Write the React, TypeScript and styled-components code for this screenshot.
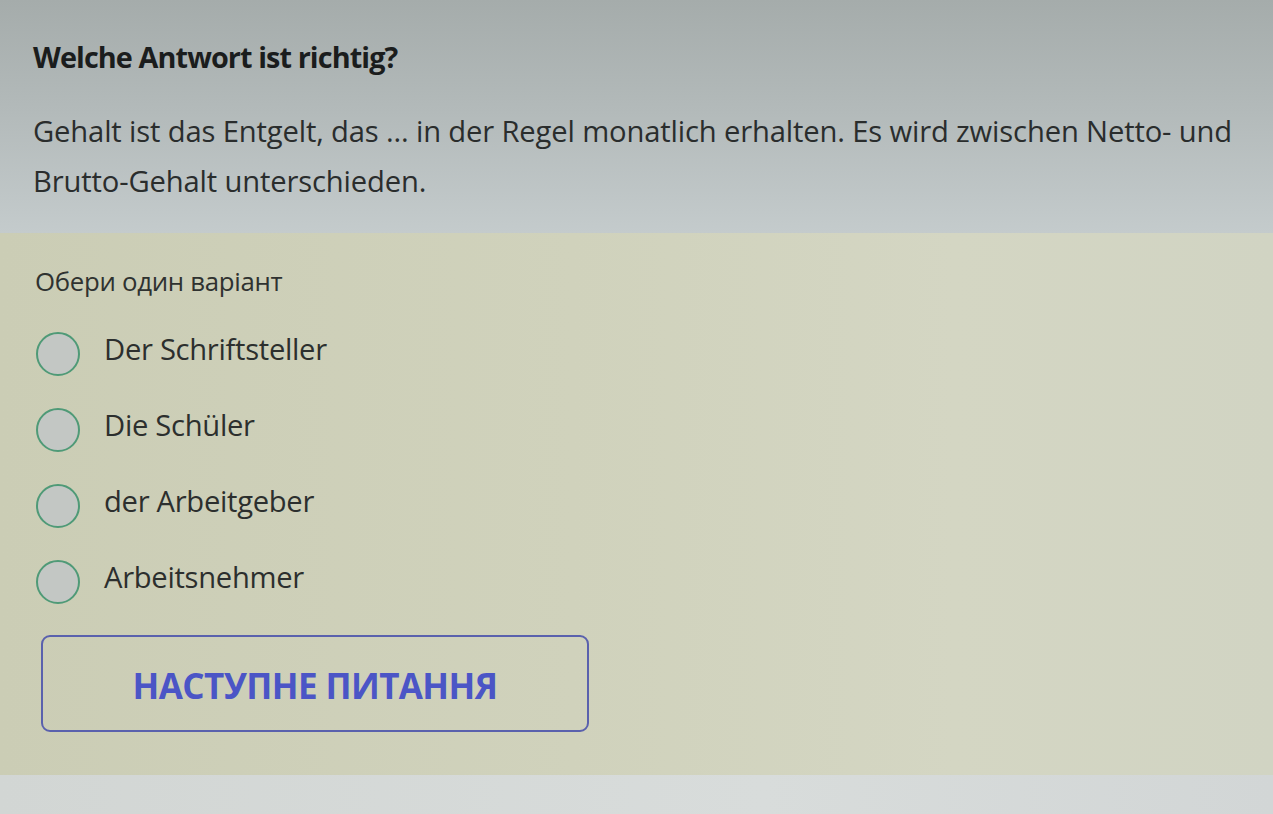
import React from "react";
import styled, { createGlobalStyle } from "styled-components";

const Global = createGlobalStyle`
  html, body { margin: 0; padding: 0; }
  body {
    width: 1273px;
    height: 814px;
    overflow: hidden;
    font-family: "Open Sans", "Noto Sans", sans-serif;
    background: #d3d7d6;
  }
`;

const Page = styled.div`
  width: 1273px;
  height: 814px;
  display: flex;
  flex-direction: column;
`;

const QuestionPanel = styled.section`
  height: 233px;
  box-sizing: border-box;
  padding: 37px 20px 0 33px;
  background: linear-gradient(180deg, #a5acab 0%, #b2b9b9 45%, #c4cbcc 100%);
`;

const Title = styled.h1`
  margin: 0;
  font-family: "Open Sans", sans-serif;
  font-size: 28.8px;
  font-weight: 700;
  letter-spacing: -0.9px;
  color: #1b1d1d;
  line-height: 40px;
`;

const Prompt = styled.p`
  margin: 29px 0 0 0;
  font-family: "Open Sans", sans-serif;
  font-size: 29.2px;
  line-height: 50px;
  color: #2a2d2d;
  letter-spacing: -0.15px;
`;

const AnswerPanel = styled.section`
  flex: 0 0 542px;
  box-sizing: border-box;
  padding: 30px 0 0 35px;
  background: linear-gradient(90deg, #cbcdb5 0%, #d0d2bc 45%, #d4d6c3 75%, #d1d4c3 100%);
`;

const Hint = styled.div`
  font-family: "Open Sans", sans-serif;
  font-size: 25.8px;
  color: #2f3230;
  line-height: 36px;
  letter-spacing: -0.3px;
`;

const Options = styled.div`
  display: flex;
  flex-direction: column;
  gap: 32px;
  margin-top: 33px;
`;

const Option = styled.label`
  display: flex;
  align-items: center;
  gap: 24px;
  height: 44px;
  cursor: pointer;
`;

const Radio = styled.span`
  width: 44px;
  height: 44px;
  border-radius: 50%;
  border: 2.5px solid #4f9a77;
  box-sizing: border-box;
  background: #c3c7c4;
  flex-shrink: 0;
  margin-left: 1px;
`;

const OptionText = styled.span`
  font-family: "Open Sans", sans-serif;
  font-size: 29.2px;
  color: #2c2f2e;
  margin-top: -10px;
  letter-spacing: -0.3px;
`;

const NextButton = styled.button`
  margin-top: 31px;
  margin-left: 6px;
  width: 548px;
  height: 97px;
  border: 2px solid #5a61ad;
  border-radius: 9px;
  background: transparent;
  font-family: "Open Sans", sans-serif;
  font-size: 35px;
  font-weight: 700;
  color: #4b55c6;
  letter-spacing: -0.6px;
  cursor: pointer;
  padding: 3px 0 0 0;
`;

const FooterStrip = styled.div`
  flex: 1;
  background: linear-gradient(90deg, #d2d6d4 0%, #d8dcdb 60%, #d2d6d6 100%);
`;

const options = ["Der Schriftsteller", "Die Schüler", "der Arbeitgeber", "Arbeitsnehmer"];

export default function App() {
  return (
    <>
      <Global />
      <Page>
        <QuestionPanel>
          <Title>Welche Antwort ist richtig?</Title>
          <Prompt>
            Gehalt ist das Entgelt, das ... in der Regel monatlich erhalten. Es wird zwischen Netto- und
            Brutto-Gehalt unterschieden.
          </Prompt>
        </QuestionPanel>
        <AnswerPanel>
          <Hint>Обери один варіант</Hint>
          <Options>
            {options.map((o) => (
              <Option key={o}>
                <Radio />
                <OptionText>{o}</OptionText>
              </Option>
            ))}
          </Options>
          <NextButton>НАСТУПНЕ ПИТАННЯ</NextButton>
        </AnswerPanel>
        <FooterStrip />
      </Page>
    </>
  );
}
